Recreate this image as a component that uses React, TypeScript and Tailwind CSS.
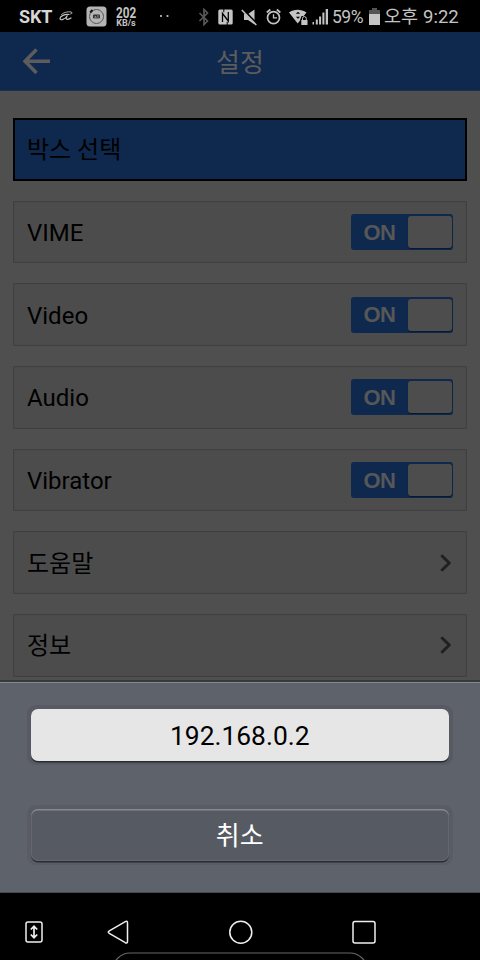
import React from 'react';

const toggles = ['VIME', 'Video', 'Audio', 'Vibrator'];
const links = ['도움말', '정보'];

const StatusBar: React.FC = () => (
  <div className="h-8 shrink-0 flex items-center bg-black text-[#c4c4c4] whitespace-nowrap">
    <span className="ml-[19px] w-[40px] text-[18px] font-bold leading-8 pt-[2px] text-[#d6d6d6] tracking-[-0.200px]">SKT</span>
    <svg className="w-4 h-[14px]" viewBox="0 0 16 14" fill="none" stroke="currentColor" strokeLinecap="round">
      <path d="M2.500 5.500C5 3 11 2 13 3.500c.5 1-1 1.500-1.500 1.500" strokeWidth=".9" />
      <path d="M10 5.500C6 4.500 1 7.500 1 9.500c0 2.500 5 1 7.500-3-1.500 2-2 4 0 3.800 1.500-.1 2.500-.6 3.500-1.300" strokeWidth="1.200" />
    </svg>
    <svg className="ml-[11px] w-[21px] h-[21px]" viewBox="0 0 21 21" fill="none">
      <rect x=".5" y=".5" width="20" height="20" rx="3.500" fill="#b5b5b5" />
      <circle cx="10.500" cy="10.500" r="7" stroke="#555" strokeWidth="1" />
      <path d="M4.200 6.500l2.300-2.500" stroke="#111" strokeWidth="2" />
      <rect x="7" y="8.500" width="7" height="4" rx="1" fill="#333" />
      <path d="M9 12.500v-2h1v2M12 9v3.500" stroke="#b5b5b5" strokeWidth=".6" />
    </svg>
    <div className="ml-[6px] w-[26px] flex flex-col items-center font-bold pt-[2px]">
      <span className="h-[12px] text-[14px] leading-[12px] scale-x-[.84]">202</span>
      <span className="h-[9px] text-[9px] leading-[9px]">KB/s</span>
    </div>
    <svg className="ml-[19px] w-[14px] h-1" viewBox="0 0 14 4" fill="currentColor">
      <circle cx="3" cy="2" r="1.100" />
      <circle cx="9.500" cy="2" r="1.100" />
    </svg>
    <svg className="ml-[26px] mt-px w-[12px] h-[18px]" viewBox="0 0 12 18" fill="none" stroke="#585858" strokeWidth="1.700">
      <path d="M1.500 5l8 8L6 16.500v-15L9.500 5l-8 8" />
    </svg>
    <svg className="ml-[8px] mt-px w-[15px] h-[16px]" viewBox="0 0 15 16">
      <rect x=".3" y=".5" width="14.400" height="15" rx="1.500" fill="currentColor" />
      <path d="M4.500 13V4.500l5.800 7.500V3" fill="none" stroke="#000" strokeWidth="1.300" />
      <path d="M5.800 0v3.200M9.200 16v-3.200" fill="none" stroke="#000" strokeWidth="1" />
    </svg>
    <svg className="ml-[8px] mt-px w-[17px] h-[18px]" viewBox="0 0 17 18">
      <path d="M3 6h4l6.500-4.500v15L7 12H3z" fill="currentColor" />
      <path d="M1.700 1.500l14.500 15" stroke="#000" strokeWidth="2.600" />
      <path d="M.8 2l14.500 15" stroke="currentColor" strokeWidth="1.600" />
    </svg>
    <svg className="ml-[8px] mt-px w-[16px] h-[18px]" viewBox="0 0 16 18" fill="none" stroke="currentColor">
      <circle cx="7.500" cy="9.700" r="6" strokeWidth="1.700" />
      <path d="M7.500 6.200v3.600H11" strokeWidth="1.300" />
      <path d="M.8 4.500L4.300 1.500M14.300 4.500l-3.500-3" strokeWidth="1.700" />
    </svg>
    <svg className="ml-[7px] mt-px w-[19px] h-[18px]" viewBox="0 0 19 18">
      <path d="M0 4.500C5 .8 12 .8 17.500 4.500L8.700 15.500z" fill="currentColor" />
      <path d="M6.800 5.800L9 3.800l2.200 2zM6.800 8.800L9 10.800l2.200-2z" fill="#000" />
      <path d="M11.300 11.500l1.200-3.500H19v10h-7.700z" fill="#000" />
      <rect x="12.300" y="12" width="6.200" height="5" fill="currentColor" />
      <path d="M13.500 12v-1.500a1.900 1.900 0 013.800 0V12" fill="none" stroke="currentColor" />
    </svg>
    <svg className="ml-[4px] mt-px w-[17px] h-[17px]" viewBox="0 0 17 17" fill="currentColor">
      <path d="M.5 14h1.500v2.500H.5zM3.800 11.500h2v5h-2zM7.100 8.500h2v8h-2zM10.400 4.500h2v12h-2zM13.700 1h2.300v15.500h-2.300z" />
    </svg>
    <span className="ml-[3px] w-[37px] text-[17.500px] leading-8 tracking-[-0.500px] pt-[2px]">59%</span>
    <svg className="mt-px w-[11px] h-[17px]" viewBox="0 0 11 17">
      <path d="M3 0h5v2h3v4H0V2h3z" fill="#555" />
      <path d="M0 6h11v11H0z" fill="currentColor" />
    </svg>
    <span className="ml-[4px] w-[34px] text-[18.500px] leading-8 pt-[2px]">오후</span>
    <span className="ml-[5px] text-[18.500px] leading-8 pt-[2px]">9:22</span>
  </div>
);

const Toggle: React.FC = () => (
  <div className="w-[102.500px] h-9 flex items-center justify-between rounded-[3px] bg-[#0f284e] pr-[1.500px] pl-[13px] mr-[0.500px]">
    <span className="font-['Liberation_Sans'] font-bold text-[22px] leading-9 tracking-[-0.500px] text-[#575757] pt-px">ON</span>
    <div className="w-[43.500px] h-8 rounded-[3px] bg-[#4d4d4d] shadow-[0_1px_1px_#0a1830]" />
  </div>
);

const ChevronIcon: React.FC = () => (
  <svg className="w-3 h-[18px] mr-[2px]" viewBox="0 0 12 18" fill="none" stroke="#202020" strokeWidth="3" strokeLinejoin="round">
    <path d="M1.300 1.200L9.300 9l-8 7.800" />
  </svg>
);

const Row: React.FC<{ label: string; children?: React.ReactNode }> = ({ label, children }) => (
  <div className="h-[62.700px] shrink-0 flex items-center justify-between border border-[#404040] bg-[#4c4c4c] pl-[13px] pr-[12.500px] rounded-[1px] shadow-[inset_0_0_1px_#404040]">
    <span className="text-[24px] leading-8 pt-[2px]">{label}</span>
    {children}
  </div>
);

const NavBar: React.FC = () => (
  <div className="h-[67px] shrink-0 bg-black overflow-hidden">
    <svg className="w-[480px] h-[67px]" viewBox="0 893 480 67" fill="none" stroke="#efefef" strokeWidth="1.500">
      <rect x="26" y="922" width="16" height="20" rx="2" />
      <path d="M34 926.500v11M30.800 929.500l3.200-3.200 3.200 3.200M30.800 934.500l3.200 3.200 3.200-3.200" strokeWidth="1.700" />
      <path d="M109.300 930.800l16-9.200q2.200-1 2.200 1.300v18.600q0 2.200-2.200 1.200l-16-9.300q-2-1.300 0-2.600z" />
      <circle cx="240.800" cy="932.300" r="11" />
      <rect x="353" y="921.500" width="22" height="21.500" rx="2" />
      <rect x="113" y="953" width="254" height="40" rx="17" stroke="#686868" strokeWidth="1.200" />
    </svg>
  </div>
);

const App: React.FC = () => {
  return (
    <div className="w-[480px] h-[960px] flex flex-col overflow-hidden bg-black font-[Roboto,'Noto_Sans_CJK_KR',sans-serif]">
      <StatusBar />

      <header className="h-[59px] shrink-0 grid grid-cols-[80px_1fr_80px] items-center bg-[#0f284e] border-b border-[#202f48]">
        <svg className="ml-[22px] w-7 h-7" viewBox="0 0 28 28" fill="none" stroke="#5c5c5c" strokeWidth="3.500">
          <path d="M28 14.200H3M14.500 2.500L3 14.200 14.500 26" />
        </svg>
        <h1 className="text-center text-[26px] leading-8 text-[#5c5c5c] pt-[3px]">설정</h1>
      </header>

      <main className="h-[589px] shrink-0 flex flex-col gap-5 px-[13px] pt-[27px] overflow-hidden bg-[#4f4f4f] text-black">
        <div className="h-[62.700px] shrink-0 flex items-center border-2 border-black bg-[#0f284e] pl-[12px]">
          <span className="text-[24px] leading-8 pt-[2px]">박스 선택</span>
        </div>
        {toggles.map((label) => (
          <Row key={label} label={label}>
            <Toggle />
          </Row>
        ))}
        {links.map((label) => (
          <Row key={label} label={label}>
            <ChevronIcon />
          </Row>
        ))}
      </main>

      {/* Action sheet */}
      <div className="h-[213px] shrink-0 flex flex-col gap-[40px] border-t-2 border-[#393939] bg-[#5e626b] px-[27px] pt-[23px] shadow-[inset_0_1px_0_#858991,inset_0_-1px_0_#454850]">
        <button className="h-[60px] shrink-0 rounded-[9px] bg-[#575a63] py-1 pl-[3.500px] pr-[4px]">
          <span className="block w-full h-[52px] rounded-[7px] bg-[#e6e6e6] text-[26.400px] leading-[54px] text-black shadow-[0_1.500px_0_#292b30]">192.168.0.2</span>
        </button>
        <button className="h-[60px] shrink-0 rounded-[9px] bg-[#595c65] py-1 pl-[3.500px] pr-[4px]">
          <span className="block w-full h-[52px] rounded-[7px] bg-[#565a62] text-[26px] leading-[55px] text-white shadow-[0_1.500px_0_#292b30,inset_0_1.500px_0_#858890,inset_0_0_0_1px_#62666e]">취소</span>
        </button>
      </div>

      <NavBar />
    </div>
  );
};

export default App;
